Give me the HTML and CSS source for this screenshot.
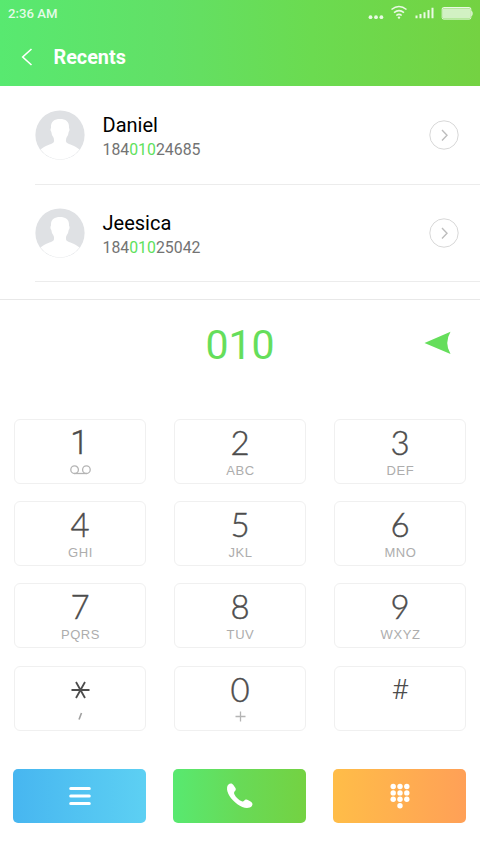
FILE: index.html
```html
<!DOCTYPE html>
<html lang="en">
<head>
<meta charset="utf-8">
<title>Recents</title>
<link rel="stylesheet" href="styles.css">
</head>
<body>
<header class="header">
  <div class="status">
    <span class="time">2:36 AM</span>
    <svg class="status-icons" width="106" height="18" viewBox="0 0 106 18">
      <g fill="currentColor"><circle cx="3.500" cy="13.200" r="1.900"/><circle cx="9" cy="13.200" r="1.900"/><circle cx="14.400" cy="13.200" r="1.900"/>
      <path d="M48.500 14.300h2V11.500h-2zM52.500 14.300h2V10h-2zM56.500 14.300h2V8.200h-2zM60.500 14.300h2V6h-2zM64.500 14.300h2V3.800h-2z"/>
      <circle cx="32" cy="13.600" r="1.200"/><rect x="76" y="4.300" width="27" height="10" opacity=".8"/><path d="M104.300 6.500c1.800 1 1.800 5 0 6z"/></g>
      <g fill="none" stroke="currentColor" stroke-width="1.600"><path d="M24.500 5.500q7.500-6 15 0M27 8.600q5-4 10 0M29.300 11.500q2.700-2.200 5.400 0"/><rect x="75.200" y="3.500" width="28.600" height="11.600" rx="1.500" stroke-width="1"/></g>
    </svg>
  </div>
  <div class="title">
    <svg width="12" height="18" viewBox="0 0 12 18"><path d="M10.500 1 1.700 9 10.500 17" fill="none" stroke="#fff" stroke-width="1.600"/></svg>
    <h1>Recents</h1>
  </div>
</header>
<main>
  <section class="recents">
    <div class="contact">
      <svg class="avatar" viewBox="0 0 50 50"><circle cx="25" cy="25" r="24.600" fill="#dfe1e4"/><path d="M5.500 39.500C10 35.500 16 34.500 18.500 32.500Q19.500 31 18.700 28Q16.500 25.500 16.400 22.300Q14.700 20 16 17.500C15.500 11.500 19.500 9 25 9s9.500 2.500 9 8.500q1.300 2.500-.4 4.800-.1 3.200-2.300 5.700-.8 3 .2 4.500C34 34.500 40 35.500 44.500 39.500A24.300 24.300 0 0 1 5.500 39.500z" fill="#fff"/></svg>
      <div class="who"><div class="name">Daniel</div><div class="number">184<b>010</b>24685</div></div>
      <svg class="more" viewBox="0 0 30 30"><circle cx="15" cy="15" r="14.200"/><path d="M13 10l5 5.200-5 5.200"/></svg>
    </div>
    <div class="contact">
      <svg class="avatar" viewBox="0 0 50 50"><circle cx="25" cy="25" r="24.600" fill="#dfe1e4"/><path d="M5.500 39.500C10 35.500 16 34.500 18.500 32.500Q19.500 31 18.700 28Q16.500 25.500 16.400 22.300Q14.700 20 16 17.500C15.500 11.500 19.500 9 25 9s9.500 2.500 9 8.500q1.300 2.500-.4 4.800-.1 3.200-2.300 5.700-.8 3 .2 4.500C34 34.500 40 35.500 44.500 39.500A24.300 24.300 0 0 1 5.500 39.500z" fill="#fff"/></svg>
      <div class="who"><div class="name">Jeesica</div><div class="number">184<b>010</b>25042</div></div>
      <svg class="more" viewBox="0 0 30 30"><circle cx="15" cy="15" r="14.200"/><path d="M13 10l5 5.200-5 5.200"/></svg>
    </div>
  </section>
  <section class="entry">
    <span></span>
    <output>010</output>
    <svg width="27" height="24" viewBox="0 0 27 24"><path d="M.5 12 26.500.800Q20 12 26.500 23z" fill="#65de5b"/></svg>
  </section>
  <section class="keys">
    <div class="key"><span class="digit one">1</span><svg class="voicemail" width="21" height="10" viewBox="0 0 21 10"><path d="M4.600 8.500h11.800"/><circle cx="4.600" cy="4.700" r="3.800"/><circle cx="16.400" cy="4.700" r="3.800"/></svg></div>
    <div class="key"><span class="digit">2</span><span class="letters">ABC</span></div>
    <div class="key"><span class="digit">3</span><span class="letters">DEF</span></div>
    <div class="key"><span class="digit">4</span><span class="letters">GHI</span></div>
    <div class="key"><span class="digit">5</span><span class="letters">JKL</span></div>
    <div class="key"><span class="digit">6</span><span class="letters">MNO</span></div>
    <div class="key"><span class="digit">7</span><span class="letters">PQRS</span></div>
    <div class="key"><span class="digit">8</span><span class="letters">TUV</span></div>
    <div class="key"><span class="digit">9</span><span class="letters">WXYZ</span></div>
    <div class="key"><svg class="star" width="20" height="34" viewBox="0 0 20 34"><path d="M1.500 16h18M6 8l9 16M15 8l-9 16"/></svg><svg class="comma" width="6" height="9" viewBox="0 0 6 9"><path d="M4.500 1 2 7.500"/></svg></div>
    <div class="key"><span class="digit">0</span><svg class="plus" width="11" height="11" viewBox="0 0 11 11"><path d="M.5 5.500h10M5.500.5v10"/></svg></div>
    <div class="key"><span class="digit hash">#</span></div>
  </section>
  <nav class="actions">
    <div class="action menu"><svg width="22" height="20" viewBox="0 0 22 20"><path d="M1.700 2.500h18.600M1.700 10h18.600M1.700 17.500h18.600" stroke="#fff" stroke-width="3" stroke-linecap="round"/></svg></div>
    <div class="action call"><svg width="26" height="26" viewBox="0 0 26 26"><path d="M1.200 1.800C3-.2 5.300.1 6.400 2c1.200 2 3.200 3.700 2.200 5.200C7.500 8.600 6.400 9.300 7.500 11.500c1.500 3 4.300 5.700 7.300 6.800 2 .8 2.200-1.300 3.900-1.800 1.400-.4 2.400.7 4 1.600 2.600 1.400 3.600 3.100 2.200 4.800-2.700 3.200-9 2.500-14.500-1.700C4 16.300-.700 10 .100 4.300Q.4 2.600 1.200 1.800z" fill="#fff"/></svg></div>
    <div class="action dial"><svg width="20" height="26" viewBox="0 0 20 26"><g fill="#fff"><circle cx="3.200" cy="3.500" r="2.700"/><circle cx="10" cy="3.500" r="2.700"/><circle cx="16.800" cy="3.500" r="2.700"/><circle cx="3.200" cy="9.900" r="2.700"/><circle cx="10" cy="9.900" r="2.700"/><circle cx="16.800" cy="9.900" r="2.700"/><circle cx="3.200" cy="16.300" r="2.700"/><circle cx="10" cy="16.300" r="2.700"/><circle cx="16.800" cy="16.300" r="2.700"/><circle cx="10" cy="22.700" r="2.700"/></g></svg></div>
  </nav>
</main>
</body>
</html>
```
FILE: styles.css
```css
* { box-sizing: border-box; }
body { margin: 0; height: 853px; overflow: hidden; background: #fff; font-family: Roboto, sans-serif; color: #000; }
svg { display: block; flex: none; overflow: visible; }
.header { height: 86.400px; background: linear-gradient(90deg, #58e970 0%, #62e066 35%, #6bdb50 65%, #74d242 100%); color: #fff; }
.status { display: flex; justify-content: space-between; height: 28px; padding: 5px 7px 0 8px; font-size: 13.200px; line-height: 18px; font-weight: 500; color: rgba(255, 255, 255, .85); }
.status-icons { margin-top: -1px; }
.title { display: flex; align-items: center; gap: 20.500px; height: 58px; padding-left: 21px; }
h1 { margin: 2px 0 0; font-size: 19.800px; line-height: 24px; font-weight: 700; }
.contact { display: flex; align-items: center; height: 97.700px; margin-left: 35px; padding-right: 21px; border-bottom: 1px solid #ececec; }
.avatar { width: 50px; height: 50px; }
.who { flex: 1; margin-left: 17.500px; padding-top: 4.200px; }
.name { font-size: 20px; line-height: 25px; }
.number { font-size: 15.850px; line-height: 24px; color: #737373; }
.number b { font-weight: 400; color: #60e15c; }
.more { width: 30px; height: 30px; fill: none; stroke: #d8d8d8; }
.more path { stroke: #bdbdbd; stroke-width: 1.400; }
.recents { padding-top: .6px; }
.entry { display: grid; grid-template-columns: 1fr auto 1fr; align-items: center; height: 90px; margin-top: 16.500px; border-top: 1px solid #e8e8e8; }
.entry output { padding-top: 2px; font-size: 41px; line-height: 50px; color: #65de5b; }
.entry svg { justify-self: end; margin: -2px 29.500px 0 0; }
.keys { display: grid; grid-template-columns: repeat(3, 132px); grid-auto-rows: 65px; justify-content: center; gap: 17.300px 28px; margin-top: 30px; }
.key { display: flex; flex-direction: column; align-items: center; padding-top: 7px; border: 1.500px solid #f0f0f0; border-radius: 6px; }
.digit { height: 34px; font-family: Lato, sans-serif; font-size: 33px; line-height: 30px; font-weight: 300; color: #4c4c4c; -webkit-text-stroke: .4px #4c4c4c; }
.one { margin-left: -1px; font-family: Roboto, sans-serif; line-height: 32px; }
.hash { font-family: Roboto, sans-serif; font-size: 28px; line-height: 32px; -webkit-text-stroke: 0; }
.letters { margin-top: 2px; font-family: "Liberation Sans", sans-serif; font-size: 13px; line-height: 16px; letter-spacing: .6px; padding-left: 1px; color: #adadad; }
.key svg { fill: none; stroke: #b4b4b4; stroke-width: 1.300; }
.key .star { stroke: #4c4c4c; stroke-width: 1.800; }
.key .comma { stroke: #a0a0a0; stroke-width: 1.600; }
.voicemail, .comma { margin-top: 4px; }
.plus { margin-top: 3.500px; }
.actions { display: grid; grid-template-columns: repeat(3, 133px); justify-content: center; gap: 27px; margin: 38.500px 1px 0 0; }
.action { display: grid; place-items: center; height: 53.500px; border-radius: 5px; }
.menu { background: linear-gradient(90deg, #47b6f0, #5dd0f3); }
.call { background: linear-gradient(90deg, #58e970, #68da57 50%, #74d242); }
.dial { background: linear-gradient(90deg, #ffbd48, #ffa057); }
```
